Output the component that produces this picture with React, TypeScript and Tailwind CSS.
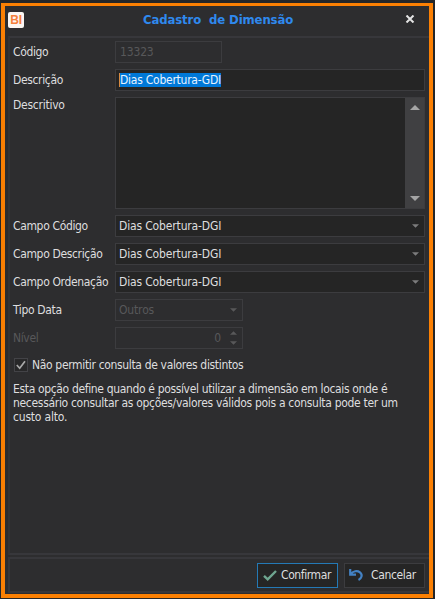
import React, { useState } from "react";

const selectFields = [
  { label: 'Campo Código', value: 'Dias Cobertura-DGI' },
  { label: 'Campo Descrição', value: 'Dias Cobertura-DGI' },
  { label: 'Campo Ordenação', value: 'Dias Cobertura-DGI' },
];

const helpLines = [
  { text: 'Esta opção define quando é possível utilizar a dimensão em locais onde é', spacing: 'tracking-[-0.35px]' },
  { text: 'necessário consultar as opções/valores válidos pois a consulta pode ter um', spacing: 'tracking-[-0.31px]' },
  { text: 'custo alto.', spacing: 'tracking-[-0.2px]' },
];

function Arrow({ up = false, className = '' }: { up?: boolean; className?: string }) {
  return (
    <svg viewBox="0 0 8 4" className={className} fill="currentColor">
      <path d={up ? 'M0 4L4 0L8 4Z' : 'M0 0H8L4 4Z'} />
    </svg>
  );
}

function Row({ label, disabled = false, children }: { label: string; disabled?: boolean; children: React.ReactNode }) {
  return (
    <div className="flex h-[22px] items-center">
      <label className={`w-[102px] shrink-0 tracking-[-0.35px] ${disabled ? 'text-[#58585a]' : 'text-[#dededf]'}`}>{label}</label>
      {children}
    </div>
  );
}

export default function App() {
  const [checked, setChecked] = useState(true);

  return (
    <div className="h-[599px] w-[435px] overflow-hidden bg-[#252628] pl-px pt-[3px] text-[12px] leading-[14px] tracking-[-0.15px] whitespace-nowrap text-[#dededf] [font-family:'DejaVu_Sans_Condensed','DejaVu_Sans',sans-serif] [font-stretch:condensed]">
      <div className="flex h-[595px] w-[432px] flex-col border-x-4 border-t-[3px] border-b-4 border-[#fb8003] bg-[#2d2d2f] pl-[3px]">

        {/* Title bar */}
        <div className="flex h-[30px] shrink-0 items-center">
          <div className="mt-[-3px] flex h-4 w-4 shrink-0 items-center justify-center rounded-[2px] bg-[#fbf7f3] text-[12px] font-bold tracking-[-0.3px] text-[#f5803c] [font-family:'Liberation_Sans',sans-serif]">BI</div>
          <h1 className="ml-[119px] mt-[-2px] w-[151px] whitespace-pre text-[13px] font-bold tracking-[-0.12px] text-[#2f89ee]">Cadastro  de Dimensão</h1>
          <button className="mt-[-4px] ml-[111px] text-[#e4e4e4]">
            <svg viewBox="0 0 10 8" className="h-2 w-[10px]" fill="none" stroke="currentColor" strokeWidth="2">
              <path d="M1.5 0.5L8.5 7.5M8.5 0.5L1.5 7.5" />
            </svg>
          </button>
        </div>

        {/* Form */}
        <div className="flex h-[519px] shrink-0 flex-col gap-[6px] border-2 border-r-0 border-[#37373b] border-l-[#343437] pl-[3px] pr-1 pt-[3px]">
          <Row label="Código">
            <div className="flex h-[22px] w-[107px] items-center border border-[#3c3c3f] pl-1 text-[#58585a]">13323</div>
          </Row>
          <Row label="Descrição">
            <div className="flex h-[22px] flex-1 items-center border border-[#3c3c3f] bg-[#252525] pl-[3px]">
              <span className="h-[14px] w-[102px] border-l border-[#d78a42] bg-[#0078d7] tracking-[-0.25px] text-[#e8f3ff]">Dias Cobertura-GDI</span>
            </div>
          </Row>
          <div className="flex h-[112px] shrink-0">
            <label className="w-[102px] shrink-0 pt-px tracking-[-0.25px]">Descritivo</label>
            <div className="flex flex-1 border border-[#3c3c3f] bg-[#252525]">
              <div className="ml-auto flex w-[19px] flex-col items-center justify-between bg-[#404042] py-[7px] text-[#a5a5a5]">
                <Arrow up className="h-[5px] w-[10px]" />
                <Arrow className="h-[5px] w-[10px]" />
              </div>
            </div>
          </div>
          {selectFields.map(field => (
            <Row key={field.label} label={field.label}>
              <div className="flex h-[22px] flex-1 items-center justify-between border border-[#3c3c3f] bg-[#252525] pl-[3px] pr-[5px]">
                {field.value}
                <Arrow className="h-1 w-[7px] text-[#7c7c7d]" />
              </div>
            </Row>
          ))}
          <Row label="Tipo Data">
            <div className="flex h-[22px] w-[128px] items-center justify-between border border-[#3c3c3f] pl-[3px] pr-[5px] text-[#58585a]">
              Outros
              <Arrow className="h-1 w-[7px]" />
            </div>
          </Row>
          <Row label="Nível" disabled>
            <div className="flex h-[22px] w-[128px] items-center justify-end border border-[#3c3c3f] pr-[5px] text-[#58585a]">
              0
              <div className="ml-[9px] flex flex-col gap-[6px]">
                <Arrow up className="h-1 w-[7px]" />
                <Arrow className="h-1 w-[7px]" />
              </div>
            </div>
          </Row>

          <button className="mt-[3px] flex h-[14px] items-center gap-1" onClick={() => setChecked(!checked)}>
            <span className="ml-px flex h-[14px] w-[14px] items-center justify-center border border-[#434347] bg-[#282829]">
              {checked && (
                <svg viewBox="0 0 10 10" className="h-[10px] w-[10px]" fill="none" stroke="#a9a9a9" strokeWidth="1.7">
                  <path d="M0.8 5L3.7 8.2L9 1.2" />
                </svg>
              )}
            </span>
            <span className="tracking-[-0.34px]">Não permitir consulta de valores distintos</span>
          </button>
          <div className="mt-[4px]">
            {helpLines.map(line => (
              <p key={line.text} className={line.spacing}>{line.text}</p>
            ))}
          </div>
        </div>

        {/* Footer */}
        <div className="mt-[2px] flex h-[36px] shrink-0 items-center justify-end gap-[6px] border-2 border-r-0 border-[#37373b] pr-1">
          <button className="flex h-[25px] w-[81px] items-center border border-[#2479b5] bg-[#252525] pl-[5px]">
            <svg viewBox="0 0 14 11" className="h-[11px] w-[14px] shrink-0 text-[#6fa690]" fill="none" stroke="currentColor" strokeWidth="2.4">
              <path d="M1 5.8L4.7 9.3L13 1" />
            </svg>
            <span className="ml-1 tracking-[-0.4px]">Confirmar</span>
          </button>
          <button className="flex h-[25px] w-[81px] items-center border border-[#3c3c3f] bg-[#252525] pl-1">
            <svg viewBox="0 0 15 12" className="h-3 w-[15px] shrink-0 text-[#4381c3]" fill="none" stroke="currentColor" strokeWidth="2.2">
              <path d="M1.2 0V5.7H7M1.5 5.3C4 1.8 8.3 1.3 11 3.4C14 5.8 12.5 9.5 9.5 11" />
            </svg>
            <span className="ml-[7px] tracking-[-0.35px]">Cancelar</span>
          </button>
        </div>

      </div>
    </div>
  );
}
